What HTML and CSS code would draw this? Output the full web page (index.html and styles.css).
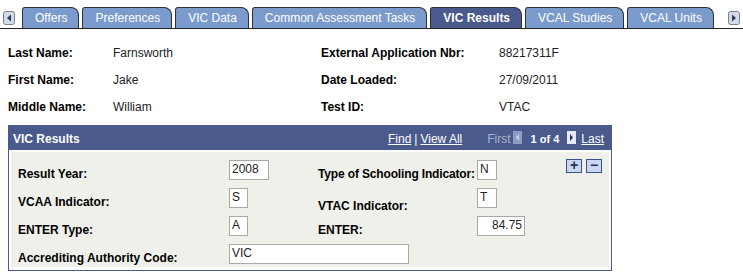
FILE: index.html
```html
<!DOCTYPE html>
<html lang="en">

<head>
  <meta charset="UTF-8" />
  <title>VIC Results</title>
  <link rel="stylesheet" href="styles.css">
</head>

<body>
  <!-- Pestañas -->
  <div class="tabbar">
    <span class="tab-arrow">
      <svg width="12" height="14" viewBox="0 0 12 14"><rect x="0.5" y="0.5" width="11" height="13" rx="2" fill="#d4dbe8" stroke="#7a7f8c"/><path d="M8 3.5 L4 7 L8 10.5 Z" fill="#2c3a66"/></svg>
    </span>
    <div class="tab">Offers</div>
    <div class="tab">Preferences</div>
    <div class="tab">VIC Data</div>
    <div class="tab">Common Assessment Tasks</div>
    <div class="tab active">VIC Results</div>
    <div class="tab">VCAL Studies</div>
    <div class="tab">VCAL Units</div>
    <span class="tab-arrow right">
      <svg width="12" height="14" viewBox="0 0 12 14"><rect x="0.5" y="0.5" width="11" height="13" rx="2" fill="#d4dbe8" stroke="#7a7f8c"/><path d="M4 3.5 L8 7 L4 10.5 Z" fill="#2c3a66"/></svg>
    </span>
  </div>

  <div class="fields">
    <div class="label">Last Name:</div>
    <div class="value">Farnsworth</div>
    <div class="label">External Application Nbr:</div>
    <div class="value">88217311F</div>

    <div class="label">First Name:</div>
    <div class="value">Jake</div>
    <div class="label">Date Loaded:</div>
    <div class="value">27/09/2011</div>

    <div class="label">Middle Name:</div>
    <div class="value">William</div>
    <div class="label">Test ID:</div>
    <div class="value">VTAC</div>
  </div>

  <div class="scroll">
    <div class="scroll-head">
      <span class="scroll-title">VIC Results</span>
      <span class="nav">
        <a href="#">Find</a> | <a href="#">View All</a>
        <span class="first">First</span>
        <svg class="nav-icon" width="9" height="13" viewBox="0 0 9 13"><rect width="9" height="13" fill="#8c9cc4"/><path d="M6 3 L3 6.5 L6 10 Z" fill="#c9d2e6"/></svg>
        <b class="count">1 of 4</b>
        <svg class="nav-icon" width="9" height="13" viewBox="0 0 9 13"><rect width="9" height="13" fill="#e4e9f4"/><path d="M3 3 L6 6.5 L3 10 Z" fill="#23305c"/></svg>
        <a href="#" class="last">Last</a>
      </span>
    </div>
    <div class="scroll-body">
      <div class="label in-row">Result Year:</div>
      <div class="input" style="width: 40px">2008</div>
      <div class="label in-row tight">Type of Schooling Indicator:</div>
      <div class="input" style="width: 20px">N</div>
      <div class="row-btns">
        <span class="btn">+</span>
        <span class="btn">&minus;</span>
      </div>

      <div class="label in-row">VCAA Indicator:</div>
      <div class="input" style="width: 19px">S</div>
      <div class="label in-row low">VTAC Indicator:</div>
      <div class="input" style="width: 20px">T</div>
      <div></div>

      <div class="label in-row">ENTER Type:</div>
      <div class="input" style="width: 19px">A</div>
      <div class="label in-row">ENTER:</div>
      <div class="input num" style="width: 48px">84.75</div>
      <div></div>

      <div class="label in-row">Accrediting Authority Code:</div>
      <div class="input wide">VIC</div>
    </div>
  </div>
</body>

</html>
```

FILE: styles.css
```css
html,
body {
  background: #fff;
  margin: 0;
  padding: 0;
}

:root {
  --tab: #7b9bcd;
  --navy: #4a5a8c;
  --panel: #f0f0eb;
}

body {
  font-family: "Liberation Sans", Arial, sans-serif;
  font-size: 12px;
  color: #000;
}

/* Pestañas */
.tabbar {
  display: flex;
  align-items: flex-end;
  height: 28px;
  border-bottom: 1px solid #222;
  padding-left: 3px;
}

.tab-arrow {
  align-self: center;
  margin-top: 7px;
  margin-right: 7px;
  height: 14px;
}

.tab-arrow.right {
  margin-left: 11px;
  margin-right: 0;
}

.tab {
  height: 20px;
  line-height: 21px;
  padding: 0 11px 0 12px;
  margin-right: 3px;
  background: var(--tab);
  color: #fff;
  border: 1px solid #2e3038;
  border-bottom: none;
  border-radius: 3px 8px 0 0;
  white-space: nowrap;
}

.tab.active {
  background: var(--navy);
  font-weight: bold;
}

/* Datos generales */
.fields {
  display: grid;
  grid-template-columns: 105px 208px 178px auto;
  grid-auto-rows: 27px;
  align-items: center;
  padding: 10px 0 0 8px;
}

.label {
  font-weight: bold;
  white-space: nowrap;
}

.value {
  color: #222;
}

/* Caja de resultados */
.scroll {
  width: 598px;
  margin: 5px 0 0 8px;
  border: 1px solid var(--navy);
  padding: 0 2px 3px 2px;
}

.scroll-head {
  display: flex;
  align-items: center;
  height: 23px;
  margin: 0 -2px;
  padding: 1px 7px 0 4px;
  background: var(--navy);
  color: #fff;
}

.scroll-title {
  font-weight: bold;
}

.nav {
  margin-left: auto;
  display: flex;
  align-items: center;
  gap: 3px;
  font-size: 12px;
}

.nav a {
  color: #fff;
}

.nav .first {
  margin-left: 22px;
  margin-right: -1px;
  color: #a9b2cc;
}

.nav .count {
  font-size: 11px;
  margin: 0 5px 0 6px;
}

.nav .last {
  margin-left: 2px;
}

.nav-icon {
  margin-top: -3px;
}

.scroll-body {
  display: grid;
  grid-template-columns: 211px 89px 159px 89px auto;
  grid-auto-rows: 28px;
  align-items: start;
  margin-top: 2px;
  padding: 8px 0 0 7px;
  height: 107px;
  background: var(--panel);
}

.in-row {
  line-height: 14px;
  padding-top: 7px;
}

.in-row.low {
  padding-top: 11px;
}

.in-row.tight {
  letter-spacing: -0.15px;
}

.input {
  box-sizing: border-box;
  height: 20px;
  line-height: 17px;
  padding: 0 2px;
  background: #fff;
  border: 1px solid #a8a8a8;
  color: #222;
}

.input.num {
  text-align: right;
}

.input.wide {
  width: 180px;
  grid-column: 2 / 5;
}

.row-btns {
  display: flex;
  gap: 4px;
  margin-top: -1px;
}

.btn {
  box-sizing: border-box;
  width: 16px;
  height: 14px;
  line-height: 11px;
  text-align: center;
  background: #cbd6ee;
  border: 1px solid #3d4f8a;
  color: #23305c;
  font-weight: bold;
  font-size: 14px;
}
```
